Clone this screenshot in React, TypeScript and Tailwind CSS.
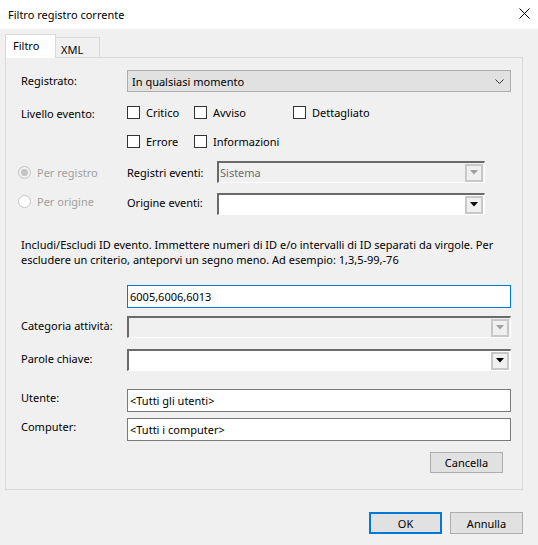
import React from "react";

const font = { fontFamily: '"Segoe UI", "Noto Sans", Roboto, sans-serif' };

function Checkbox({ label }: { label: string }) {
  return (
    <div className="flex items-center">
      <div className="w-[13px] h-[13px] border border-[#333333] bg-white" />
      <span className="ml-[6px]">{label}</span>
    </div>
  );
}

function Arrow({ disabled }: { disabled?: boolean }) {
  return (
    <div className="w-[18px] h-[18px] border-2 border-[#c8c8c8] bg-[#f0f0f0] flex items-center justify-center">
      <svg width="8" height="5" viewBox="0 0 8 5">
        <polygon points="0,0 8,0 4,4.5" fill={disabled ? "#a0a0a0" : "#000"} />
      </svg>
    </div>
  );
}

function Combo({ text, disabled, className }: { text?: string; disabled?: boolean; className: string }) {
  return (
    <div
      className={`h-[22px] flex items-center border-t-2 border-l-2 border-t-[#6a6a6a] border-l-[#6a6a6a] border-b border-r border-b-white border-r-white ${
        disabled ? "bg-[#f0f0f0]" : "bg-white"
      } ${className}`}
    >
      <span className={`flex-1 pl-[1px] ${disabled ? "text-[#6d6d6d]" : ""}`}>{text}</span>
      <div className="pr-[1px]">
        <Arrow disabled={disabled} />
      </div>
    </div>
  );
}

function TextBox({ text, focus }: { text: string; focus?: boolean }) {
  return (
    <div
      className={`h-[23px] w-[384px] bg-white border flex items-center pl-[2px] ${
        focus ? "border-[#0078d7]" : "border-[#7a7a7a]"
      }`}
    >
      {text}
    </div>
  );
}

export default function App() {
  return (
    <div className="w-[538px] h-[545px] bg-[#f0f0f0] text-[11px] text-black flex flex-col leading-[15px]" style={font}>
      <div className="h-[29px] bg-white flex items-center justify-between pl-[8px] pr-[8px] shrink-0">
        <span className="text-[11px]">Filtro registro corrente</span>
        <svg width="11" height="11" viewBox="0 0 11 11" className="mb-[2px]">
          <path d="M0.5 0.5 L10.5 10.5 M10.5 0.5 L0.5 10.5" stroke="#000" strokeWidth="1" />
        </svg>
      </div>
      <div className="pl-[5px] pt-[5px] flex flex-col">
        <div className="flex items-end h-[23px]">
          <div className="w-[51px] h-[24px] bg-white border border-b-0 border-[#d9d9d9] pl-[7px] pt-[3px] -mb-[1px] relative z-10">
            Filtro
          </div>
          <div className="w-[44px] h-[20px] border border-b-0 border-l-0 border-[#d9d9d9] pl-[5px] pt-[4px]">XML</div>
        </div>
        <div className="w-[518px] h-[433px] border border-[#d9d9d9] flex flex-col pl-[15px]">
          {/* Registrato */}
          <div className="flex mt-[12px]">
            <div className="w-[106px] pt-[3px]">Registrato:</div>
            <div className="w-[384px] h-[22px] bg-[#e1e1e1] border border-[#adadad] flex items-center pl-[4px] pr-[6px] justify-between">
              <span className="pt-[1px]">In qualsiasi momento</span>
              <svg width="9" height="5" viewBox="0 0 9 5">
                <path d="M0.5 0.5 L4.5 4.5 L8.5 0.5" stroke="#333" fill="none" strokeWidth="1" />
              </svg>
            </div>
          </div>
          {/* Livello evento */}
          <div className="flex mt-[13px]">
            <div className="w-[106px] pt-[1px]">Livello evento:</div>
            <div className="flex flex-col">
              <div className="flex h-[15px] items-center">
                <div className="w-[67px]"><Checkbox label="Critico" /></div>
                <div className="w-[99px]"><Checkbox label="Avviso" /></div>
                <Checkbox label="Dettagliato" />
              </div>
              <div className="flex h-[15px] items-center mt-[14px]">
                <div className="w-[67px]"><Checkbox label="Errore" /></div>
                <Checkbox label="Informazioni" />
              </div>
            </div>
          </div>
          {/* Per registro */}
          <div className="flex items-center mt-[12px] h-[22px] -ml-[3px]">
            <div className="w-[109px] flex items-center text-[#a0a0a0]">
              <div className="w-[13px] h-[13px] rounded-full border border-[#c4c4c4] bg-[#f0f0f0] flex items-center justify-center">
                <div className="w-[7px] h-[7px] rounded-full bg-[#c4c4c4]" />
              </div>
              <span className="ml-[6px]">Per registro</span>
            </div>
            <div className="w-[90px]">Registri eventi:</div>
            <Combo text="Sistema" disabled className="w-[268px]" />
          </div>
          <div className="flex items-center mt-[10px] h-[22px] -ml-[3px]">
            <div className="w-[109px] flex items-center text-[#a0a0a0] -mt-[6px]">
              <div className="w-[13px] h-[13px] rounded-full border border-[#c4c4c4] bg-white" />
              <span className="ml-[6px]">Per origine</span>
            </div>
            <div className="w-[90px] -mt-[4px]">Origine eventi:</div>
            <Combo className="w-[268px]" />
          </div>
          {/* description */}
          <div className="mt-[22px] w-[490px]">
            Includi/Escludi ID evento. Immettere numeri di ID e/o intervalli di ID separati da virgole. Per escludere un
            criterio, anteporvi un segno meno. Ad esempio: 1,3,5-99,-76
          </div>
          <div className="flex mt-[18px] pl-[106px]">
            <TextBox text="6005,6006,6013" focus />
          </div>
          <div className="flex mt-[8px]">
            <div className="w-[106px] pt-[2px]">Categoria attività:</div>
            <Combo disabled className="w-[384px]" />
          </div>
          <div className="flex mt-[11px]">
            <div className="w-[106px] pt-[2px]">Parole chiave:</div>
            <Combo className="w-[384px]" />
          </div>
          <div className="flex mt-[18px]">
            <div className="w-[106px] pt-[1px]">Utente:</div>
            <TextBox text="<Tutti gli utenti>" />
          </div>
          <div className="flex mt-[6px]">
            <div className="w-[106px] pt-[1px]">Computer:</div>
            <TextBox text="<Tutti i computer>" />
          </div>
          <div className="flex justify-end mt-[11px] pr-[19px]">
            <div className="w-[73px] h-[21px] bg-[#e1e1e1] border border-[#adadad] flex items-center justify-center">
              Cancella
            </div>
          </div>
        </div>
        <div className="flex justify-end mt-[22px] pr-[15px] gap-[8px]">
          <div className="w-[73px] h-[22px] bg-[#e1e1e1] border-2 border-[#0078d7] flex items-center justify-center">
            OK
          </div>
          <div className="w-[73px] h-[22px] bg-[#e1e1e1] border border-[#adadad] flex items-center justify-center">
            Annulla
          </div>
        </div>
      </div>
    </div>
  );
}
